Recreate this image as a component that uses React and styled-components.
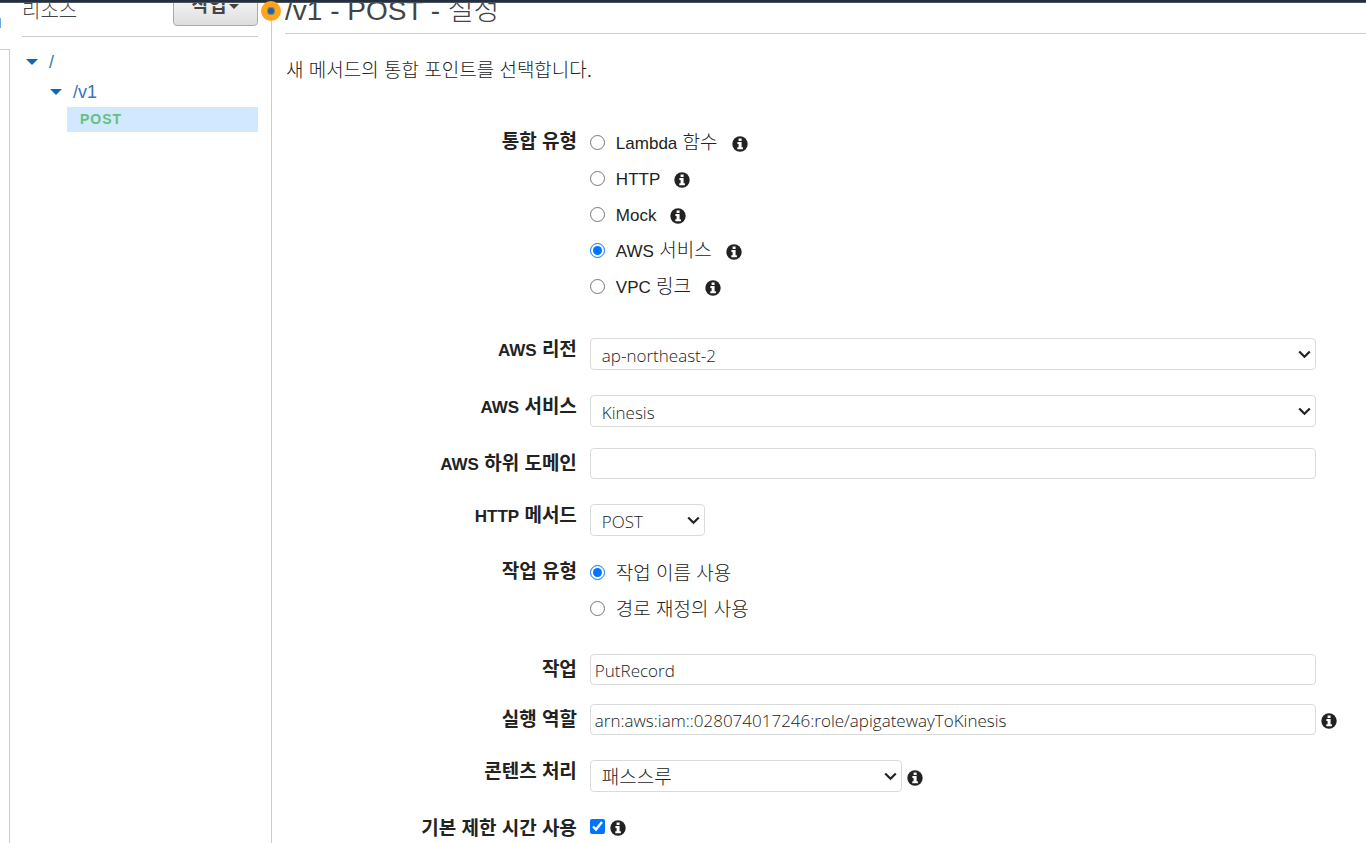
import React from "react";
import styled, { createGlobalStyle } from "styled-components";

const GlobalStyle = createGlobalStyle`
  *, *::before, *::after { box-sizing: border-box; }
  body {
    margin: 0;
    background: #fff;
    color: #222;
    font-family: "Liberation Sans", "Noto Sans CJK KR", sans-serif;
    font-size: 19px;
    line-height: 24px;
  }
`;

const Page = styled.div`
  display: flex;
  flex-direction: column;
  min-height: 100vh;
`;

const TopBar = styled.header`
  height: 3px;
  background: #232f3e;
  border-bottom: 1px solid #4a5360;
`;

const Columns = styled.div`
  display: flex;
  flex: 1;
`;

const ApiStrip = styled.aside`
  flex: none;
  display: flex;
  flex-direction: column;
  width: 10px;
  padding-top: 15px;
`;

const ActiveMark = styled.span`
  width: 1px;
  height: 10px;
  background: #6aaae4;
`;

const StripFrame = styled.div`
  flex: 1;
  margin-top: 21px;
  border-top: 1px solid #ccc;
  border-right: 1px solid #ccc;
`;

const Resources = styled.nav`
  position: relative;
  flex: none;
  width: 262px;
  padding: 0 13px 0 12px;
  border-right: 1px solid #ccc;
`;

const ResourcesHead = styled.div`
  display: flex;
  justify-content: space-between;
  align-items: flex-end;
  height: 34px;
  padding-bottom: 10px;
  border-bottom: 1px solid #ccc;
  overflow: hidden;
`;

const ResourcesTitle = styled.h2`
  margin: 0 0 3px;
  color: #444;
  font-size: 20px;
  font-weight: 300;
  line-height: 24px;
`;

const ActionsButton = styled.button`
  display: flex;
  align-items: center;
  justify-content: center;
  gap: 3px;
  width: 85px;
  height: 40px;
  padding: 0;
  border: 1px solid #aaa;
  border-radius: 4px;
  background: linear-gradient(#fff, #dedede);
  color: #444;
  font: bold 19px/24px "Liberation Sans", "Noto Sans CJK KR", sans-serif;
`;

const SplitKnob = styled.span`
  position: absolute;
  top: -2px;
  right: -10px;
  width: 20px;
  height: 20px;
  border: 6px solid #ffa41c;
  border-radius: 50%;
  background: #1166bb;
  box-shadow: inset 0 0 0 1px #a08440;
`;

const Tree = styled.ul`
  margin: 0;
  padding: 10px 0 0;
  list-style: none;
`;

const TreeItem = styled.li`
  display: flex;
  align-items: center;
  gap: 11px;
  height: 30px;
  padding-left: ${(p) => p.$level * 24 + 4}px;
`;

const TreeLink = styled.a`
  color: #3b73b9;
  font-size: 18px;
  text-decoration: none;
`;

const Triangle = styled.svg`
  width: ${(p) => p.$size}px;
  fill: currentColor;
  color: ${(p) => p.$color};
`;

const MethodItem = styled.li`
  margin-left: 45px;
  padding-left: 13px;
  background: #d1e8ff;
`;

const MethodLink = styled.a`
  display: block;
  color: #67bf7f;
  font-size: 14px;
  font-weight: bold;
  line-height: 25px;
  letter-spacing: 1px;
  text-decoration: none;
`;

const Content = styled.main`
  flex: 1;
  min-width: 0;
  padding-left: 13px;
`;

const TitleBox = styled.div`
  display: flex;
  align-items: flex-end;
  height: 31px;
  padding-bottom: 5px;
  border-bottom: 1px solid #ccc;
  overflow: hidden;
`;

const Title = styled.h1`
  margin: 0;
  color: #444;
  font-size: 28px;
  font-weight: 300;
  line-height: 34px;
`;

const Intro = styled.p`
  margin: 0;
  padding: 25px 0 41px 1px;
  font-weight: 300;
`;

const Latin = styled.span`
  font-size: 17px;
`;

const Form = styled.form`
  display: flex;
  flex-direction: column;
`;

const Row = styled.div`
  display: flex;
  align-items: flex-start;
  gap: 13px;
  margin-bottom: ${(p) => p.$after}px;
`;

const labelStyles = `
  flex: none;
  width: 27%;
  font-weight: bold;
  text-align: right;
`;

const Label = styled.label`
  ${labelStyles}
  line-height: ${(p) => (p.$select ? 24 : 31)}px;
`;

const GroupLabel = styled.div`
  ${labelStyles}
  line-height: 36px;
`;

const Control = styled.div`
  flex: 1;
  min-width: 0;
  display: grid;
  grid-template-columns: minmax(0, 1fr) 45px;
  align-items: center;
  column-gap: 5px;
`;

const Inline = styled.div`
  display: flex;
  align-items: center;
  gap: 5px;
  min-height: 27px;
`;

const fieldStyles = `
  width: 100%;
  border: 1px solid #d9dbdb;
  border-radius: 4px;
  background: #fff;
  color: #222;
  font-family: "Open Sans", "Noto Sans CJK KR", sans-serif;
  font-weight: 300;
`;

const TextField = styled.input`
  ${fieldStyles}
  height: 31px;
  padding: 2px 4px 0;
  font-size: 17px;
`;

const SelectBox = styled.div`
  position: relative;
  width: ${(p) => p.$width || "100%"};
`;

const SelectField = styled.select`
  ${fieldStyles}
  display: block;
  appearance: none;
  height: 32px;
  padding: 2px 24px 0 11px;
  font-size: ${(p) => (p.$korean ? 19 : 17)}px;
`;

const Chevron = styled.svg`
  position: absolute;
  top: 12px;
  right: 5px;
  width: 13px;
  height: 9px;
  fill: none;
  stroke: #222;
  stroke-width: 2.2;
  pointer-events: none;
`;

const Choices = styled.div`
  display: flex;
  flex-direction: column;
`;

const Choice = styled.div`
  display: flex;
  align-items: center;
  height: 36px;
`;

const ChoiceLabel = styled.label`
  padding: 3px 14px 0 11px;
  font-weight: 300;
`;

const Tick = styled.input`
  width: 15px;
  height: 15px;
  margin: 0;
  accent-color: #0075ff;
`;

const InfoIcon = styled.svg`
  flex: none;
  width: 16px;
  height: 16px;
  margin-top: 3px;
`;

const integrationTypes = [
  { id: "lambda", latin: "Lambda", rest: " 함수" },
  { id: "http", latin: "HTTP", rest: "" },
  { id: "mock", latin: "Mock", rest: "" },
  { id: "aws", latin: "AWS", rest: " 서비스", checked: true },
  { id: "vpc", latin: "VPC", rest: " 링크" },
];

const actionTypes = [
  { id: "name", rest: "작업 이름 사용", checked: true },
  { id: "path", rest: "경로 재정의 사용" },
];

function Info() {
  return (
    <InfoIcon viewBox="0 0 16 16" aria-hidden="true">
      <circle cx="8" cy="8" r="7.7" fill="#222" />
      <path fill="#fff" d="M6.6 2.4h3v2.5h-3zM5.4 6.1h4.2v5.2h1.3v2H5.3v-2h1.3V8.1H5.4z" />
    </InfoIcon>
  );
}

function Caret({ size = 12, color = "#1166bb" }) {
  return (
    <Triangle viewBox="0 0 12 6" $size={size} $color={color} aria-hidden="true">
      <path d="M0 0h12L6 6z" />
    </Triangle>
  );
}

function Select({ id, value, width, korean }) {
  return (
    <SelectBox $width={width}>
      <SelectField id={id} $korean={korean}>
        <option>{value}</option>
      </SelectField>
      <Chevron viewBox="0 0 13 9" aria-hidden="true">
        <path d="M1.2 1.5 6.5 6.8l5.3-5.3" />
      </Chevron>
    </SelectBox>
  );
}

function RadioRow({ label, name, options, info, after }) {
  return (
    <Row $after={after} role="radiogroup" aria-labelledby={`${name}-label`}>
      <GroupLabel id={`${name}-label`}>{label}</GroupLabel>
      <Choices>
        {options.map((o) => (
          <Choice key={o.id}>
            <Tick type="radio" name={name} id={`${name}-${o.id}`} defaultChecked={o.checked} />
            <ChoiceLabel htmlFor={`${name}-${o.id}`}>
              {o.latin && <Latin>{o.latin}</Latin>}
              {o.rest}
            </ChoiceLabel>
            {info && <Info />}
          </Choice>
        ))}
      </Choices>
    </Row>
  );
}

export default function App() {
  return (
    <Page>
      <GlobalStyle />
      <TopBar />
      <Columns>
        <ApiStrip>
          <ActiveMark />
          <StripFrame />
        </ApiStrip>

        <Resources>
          <ResourcesHead>
            <ResourcesTitle>리소스</ResourcesTitle>
            <ActionsButton type="button">
              작업
              <Caret size={10} color="#444" />
            </ActionsButton>
          </ResourcesHead>
          <SplitKnob />
          <Tree>
            <TreeItem $level={0}>
              <Caret />
              <TreeLink href="#root">/</TreeLink>
            </TreeItem>
            <TreeItem $level={1}>
              <Caret />
              <TreeLink href="#v1">/v1</TreeLink>
            </TreeItem>
            <MethodItem>
              <MethodLink href="#post">POST</MethodLink>
            </MethodItem>
          </Tree>
        </Resources>

        <Content>
          <TitleBox>
            <Title>/v1 - POST - 설정</Title>
          </TitleBox>
          <Intro>새 메서드의 통합 포인트를 선택합니다.</Intro>

          <Form>
            <RadioRow label="통합 유형" name="integration" options={integrationTypes} info after={34} />
            <Row $after={25}>
              <Label $select htmlFor="region"><Latin>AWS</Latin> 리전</Label>
              <Control>
                <Select id="region" value="ap-northeast-2" />
              </Control>
            </Row>
            <Row $after={21}>
              <Label $select htmlFor="service"><Latin>AWS</Latin> 서비스</Label>
              <Control>
                <Select id="service" value="Kinesis" />
              </Control>
            </Row>
            <Row $after={24}>
              <Label htmlFor="subdomain"><Latin>AWS</Latin> 하위 도메인</Label>
              <Control>
                <TextField id="subdomain" type="text" />
              </Control>
            </Row>
            <Row $after={18}>
              <Label $select htmlFor="method"><Latin>HTTP</Latin> 메서드</Label>
              <Control>
                <Select id="method" value="POST" width="115px" />
              </Control>
            </Row>
            <RadioRow label="작업 유형" name="action-type" options={actionTypes} after={28} />
            <Row $after={19}>
              <Label htmlFor="action">작업</Label>
              <Control>
                <TextField id="action" type="text" defaultValue="PutRecord" />
              </Control>
            </Row>
            <Row $after={25}>
              <Label htmlFor="role">실행 역할</Label>
              <Control>
                <TextField id="role" type="text" defaultValue="arn:aws:iam::028074017246:role/apigatewayToKinesis" />
                <Info />
              </Control>
            </Row>
            <Row $after={21}>
              <Label $select htmlFor="handling">콘텐츠 처리</Label>
              <Inline>
                <Select id="handling" value="패스스루" width="312px" korean />
                <Info />
              </Inline>
            </Row>
            <Row $after={0}>
              <Label htmlFor="timeout">기본 제한 시간 사용</Label>
              <Inline>
                <Tick id="timeout" type="checkbox" defaultChecked />
                <Info />
              </Inline>
            </Row>
          </Form>
        </Content>
      </Columns>
    </Page>
  );
}
